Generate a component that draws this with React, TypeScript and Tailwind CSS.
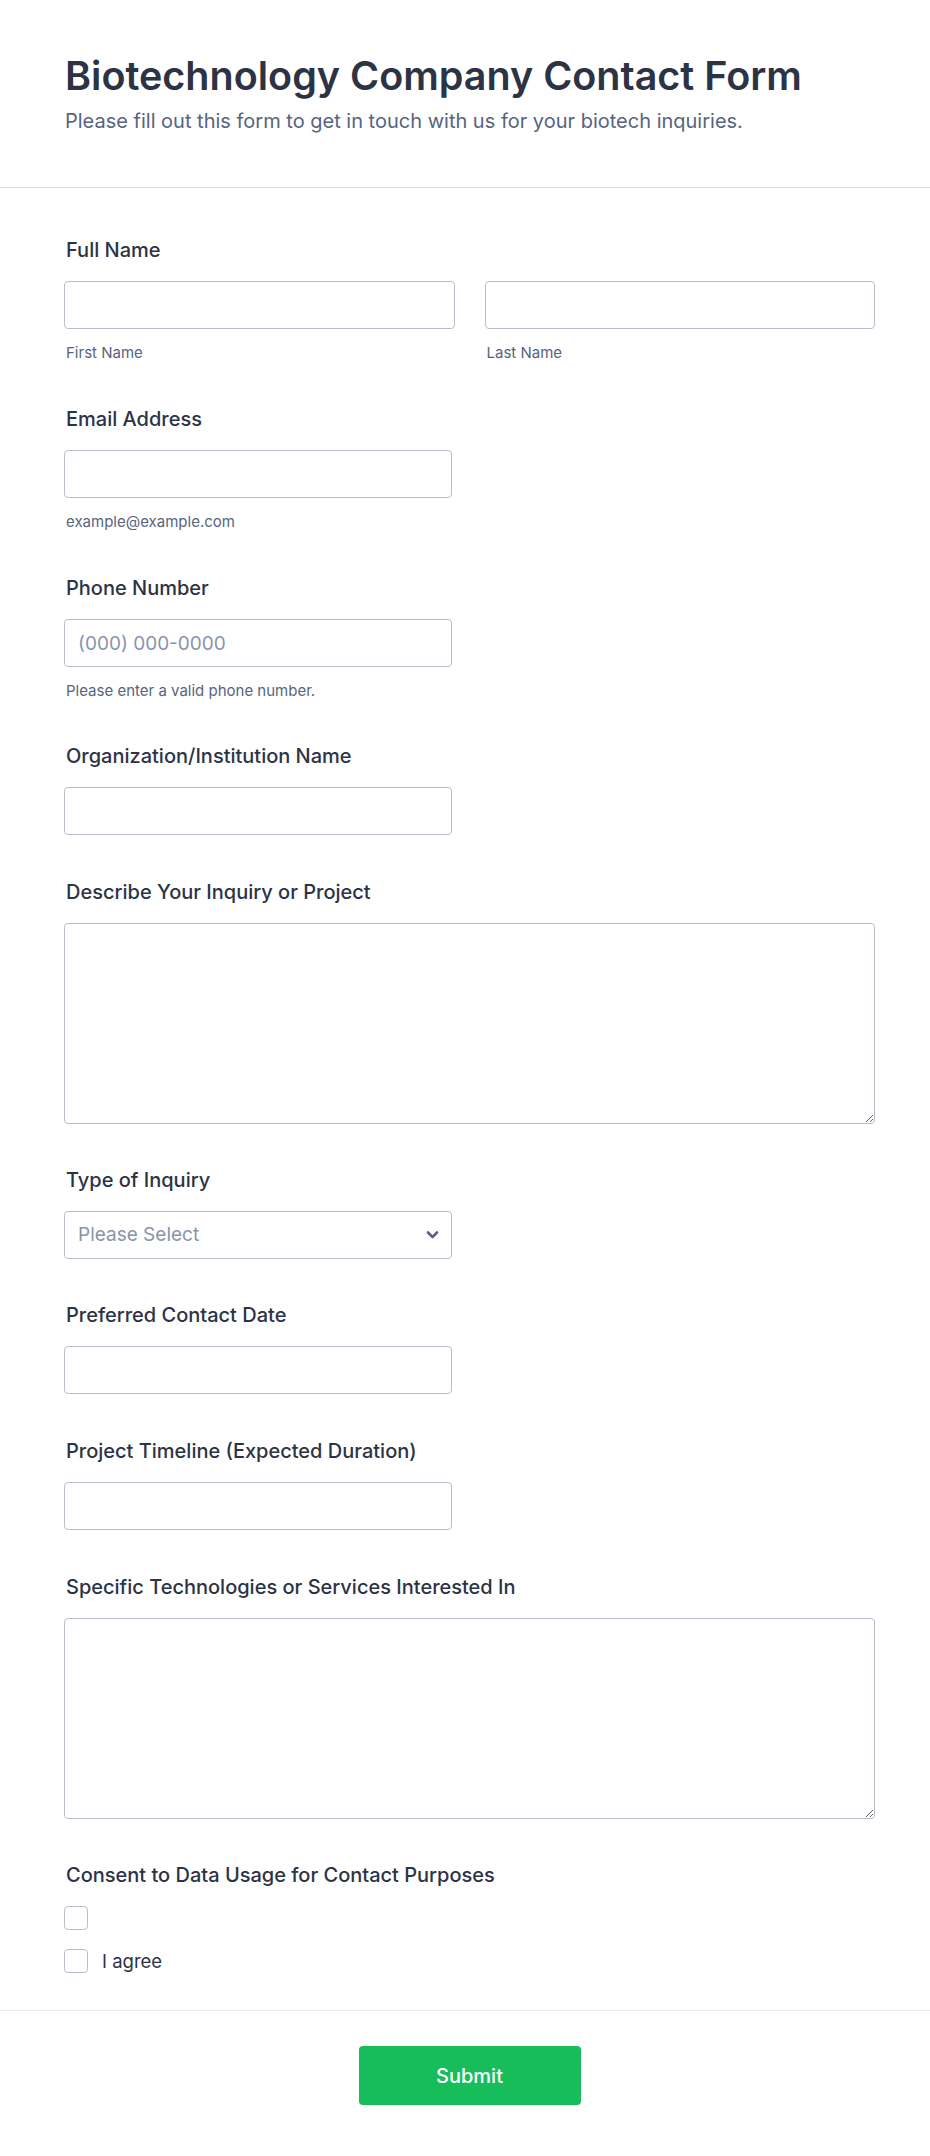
import React from 'react';

const inputBase =
    'h-[48px] rounded-[4px] border border-[#b8bdc9] bg-white px-[13px] text-[19px] text-[#2c3345] placeholder-[#8894ab] outline-none';

const Label: React.FC<{ children: React.ReactNode }> = ({ children }) => (
    <label className="block pl-[2px] text-[20px] leading-[24px] font-medium text-[#2c3345] mb-[19px]">
        {children}
    </label>
);

const SubLabel: React.FC<{ children: React.ReactNode }> = ({ children }) => (
    <span className="block pl-[2px] mt-[15px] text-[15px] leading-[18px] text-[#57647e]">{children}</span>
);

const App: React.FC = () => {
    return (
        <div className="min-h-screen bg-white font-['Inter',sans-serif] text-[#2c3345]">
            <header className="pl-[65px] pr-[55px] pt-[52px] pb-[53px] border-b border-[#d8dae9]">
                <h1 className="text-[39.5px] leading-[48px] font-semibold text-[#2c3345]">
                    Biotechnology Company Contact Form
                </h1>
                <p className="mt-[8px] text-[20px] leading-[26px] text-[#57647e]">
                    Please fill out this form to get in touch with us for your biotech inquiries.
                </p>
            </header>

            <form className="pl-[64px] pr-[55px] pt-[50px]" onSubmit={(e) => e.preventDefault()}>
                {/* Full Name */}
                <div className="pb-[45px]">
                    <Label>Full Name</Label>
                    <div className="grid grid-cols-2 gap-[30px]">
                        <div>
                            <input type="text" className={`${inputBase} w-full`} />
                            <SubLabel>First Name</SubLabel>
                        </div>
                        <div>
                            <input type="text" className={`${inputBase} w-full`} />
                            <SubLabel>Last Name</SubLabel>
                        </div>
                    </div>
                </div>

                {/* Email */}
                <div className="pb-[45px]">
                    <Label>Email Address</Label>
                    <input type="email" className={`${inputBase} w-[388px]`} />
                    <SubLabel>example@example.com</SubLabel>
                </div>

                {/* Phone */}
                <div className="pb-[44px]">
                    <Label>Phone Number</Label>
                    <input type="tel" placeholder="(000) 000-0000" className={`${inputBase} w-[388px]`} />
                    <SubLabel>Please enter a valid phone number.</SubLabel>
                </div>

                <div className="pb-[45px]">
                    <Label>Organization/Institution Name</Label>
                    <input type="text" className={`${inputBase} w-[388px]`} />
                </div>

                <div className="pb-[44px]">
                    <Label>Describe Your Inquiry or Project</Label>
                    <textarea className="block w-full h-[201px] rounded-[4px] border border-[#b8bdc9] bg-white px-[13px] py-[10px] text-[19px] outline-none" />
                </div>

                <div className="pb-[44px]">
                    <Label>Type of Inquiry</Label>
                    <div className="relative w-[388px]">
                        <select
                            defaultValue=""
                            className={`${inputBase} w-full appearance-none text-[#8894ab]`}
                        >
                            <option value="" disabled>
                                Please Select
                            </option>
                            <option>Research Collaboration</option>
                            <option>Product Information</option>
                            <option>Partnership</option>
                            <option>Other</option>
                        </select>
                        <svg
                            className="pointer-events-none absolute right-[13px] top-1/2 -translate-y-1/2"
                            width="13"
                            height="9"
                            viewBox="0 0 13 9"
                            fill="none"
                        >
                            <path d="M2 2L6.5 6.5L11 2" stroke="#57647e" strokeWidth="2.6" strokeLinecap="round" strokeLinejoin="round" />
                        </svg>
                    </div>
                </div>

                <div className="pb-[45px]">
                    <Label>Preferred Contact Date</Label>
                    <input type="text" className={`${inputBase} w-[388px]`} />
                </div>

                <div className="pb-[45px]">
                    <Label>Project Timeline (Expected Duration)</Label>
                    <input type="text" className={`${inputBase} w-[388px]`} />
                </div>

                <div className="pb-[44px]">
                    <Label>Specific Technologies or Services Interested In</Label>
                    <textarea className="block w-full h-[201px] rounded-[4px] border border-[#b8bdc9] bg-white px-[13px] py-[10px] text-[19px] outline-none" />
                </div>

                <div className="pb-[37px]">
                    <Label>Consent to Data Usage for Contact Purposes</Label>
                    <div className="flex flex-col gap-[19px]">
                        <input type="checkbox" className="block appearance-none w-[24px] h-[24px] rounded-[4px] border border-[#b8bdc9] bg-white" />
                        <label className="flex items-center gap-[14px]">
                            <input type="checkbox" className="block appearance-none w-[24px] h-[24px] rounded-[4px] border border-[#b8bdc9] bg-white" />
                            <span className="text-[18.5px] leading-[24px] text-[#2c3345]">I agree</span>
                        </label>
                    </div>
                </div>
            </form>

            <footer className="flex justify-center border-t border-[#e8e8ef] pl-[64px] pr-[55px] pt-[35px] pb-[51px]">
                <button
                    type="submit"
                    className="w-[222px] h-[59px] rounded-[4px] bg-[#18bd5b] text-white text-[20px] font-medium"
                >
                    Submit
                </button>
            </footer>
        </div>
    );
};

export default App;
